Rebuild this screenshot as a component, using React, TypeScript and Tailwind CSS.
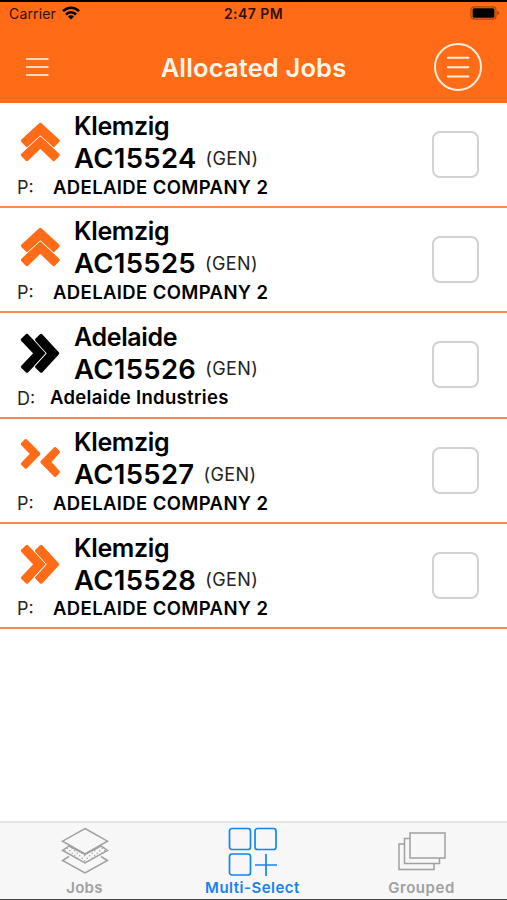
import React, { useState } from 'react';

type Direction = 'up' | 'right' | 'meet';

interface Job {
    suburb: string;
    number: string;
    kind: string;
    label: string;
    company: string;
    direction: Direction;
    iconColor: string;
}

const jobs: Job[] = [
    { suburb: 'Klemzig', number: 'AC15524', kind: '(GEN)', label: 'P:', company: 'ADELAIDE COMPANY 2', direction: 'up', iconColor: 'text-[#ff6b17]' },
    { suburb: 'Klemzig', number: 'AC15525', kind: '(GEN)', label: 'P:', company: 'ADELAIDE COMPANY 2', direction: 'up', iconColor: 'text-[#ff6b17]' },
    { suburb: 'Adelaide', number: 'AC15526', kind: '(GEN)', label: 'D:', company: 'Adelaide Industries', direction: 'right', iconColor: 'text-black' },
    { suburb: 'Klemzig', number: 'AC15527', kind: '(GEN)', label: 'P:', company: 'ADELAIDE COMPANY 2', direction: 'meet', iconColor: 'text-[#ff6b17]' },
    { suburb: 'Klemzig', number: 'AC15528', kind: '(GEN)', label: 'P:', company: 'ADELAIDE COMPANY 2', direction: 'right', iconColor: 'text-[#ff6b17]' },
];

const JobIcon: React.FC<{ direction: Direction }> = ({ direction }) => {
    if (direction === 'meet') {
        return (
            <svg width="40" height="40" viewBox="0 0 40 40" fill="currentColor" stroke="currentColor" strokeWidth="3.400" strokeLinejoin="round">
                <path d="M5.800 2.800 18.600 15.800 5.800 29 2.500 25.800 12 15.800 2.500 6Z" />
                <path d="M35.200 10.800 22.200 24 35.200 37.200 38.200 34 29 24 38.200 14Z" />
            </svg>
        );
    }
    return (
        <svg
            width="40"
            height="40"
            viewBox="0 0 40 40"
            fill="currentColor"
            stroke="currentColor"
            strokeWidth="3.400"
            strokeLinejoin="round"
            className={direction === 'right' ? 'rotate-90' : ''}
        >
            <path d="M20.300 16 38 33 33.800 37.400 20.300 24.600 6.800 37.400 2.600 33Z" />
            <path d="M20.300 2.500 38 18.800 33.800 23.200 20.300 11 6.800 23.200 2.600 18.800Z" stroke="white" strokeWidth="5" />
            <path d="M20.300 2.500 38 18.800 33.800 23.200 20.300 11 6.800 23.200 2.600 18.800Z" />
        </svg>
    );
};

const StatusBar: React.FC = () => (
    <div className="-mt-px grid h-6 grid-cols-3 items-center pl-[9px] pr-[6px] text-[#301000]">
        <div className="flex items-center gap-[6px]">
            <span className="text-[14px] tracking-[0.15px]">Carrier</span>
            <svg width="18" height="14" viewBox="0 0 18 14" fill="none" stroke="black" strokeWidth="2.6">
                <path d="M1 5.2C5.5.5 12.500.5 17 5.200" />
                <path d="M4 8.500C6.800 5.500 11.200 5.500 14 8.500" />
                <path d="M9 13.500 5.900 10.400C7.600 8.700 10.400 8.700 12.100 10.400Z" fill="black" stroke="none" />
            </svg>
        </div>
        <span className="-ml-[3px] text-center text-[14px] font-semibold tracking-[0.45px]">2:47 PM</span>
        <svg width="31" height="14" viewBox="0 0 31 14" className="justify-self-end">
            <rect x="1" y="0.800" width="25" height="12.400" rx="3.200" fill="none" stroke="#a94608" strokeWidth="1.200" />
            <rect x="2.600" y="2.300" width="21.800" height="9.400" rx="1.500" fill="black" />
            <path d="M27.300 4.800v4.400c2.600-.8 2.600-3.600 0-4.400Z" fill="#a94608" />
        </svg>
    </div>
);

const Header: React.FC = () => (
    <header className="h-[102.500px] border-t-2 border-black bg-[#ff6b17]">
        <StatusBar />
        <div className="grid h-[84px] grid-cols-[100px_1fr_100px] items-center">
            <button type="button" className="pl-[26px]" aria-label="Menu">
                <svg width="24" height="20" viewBox="0 0 24 20" stroke="#ffd9b8" strokeWidth="2">
                    <path d="M0 2h22.500M0 10h22.500M0 18h22.500" />
                </svg>
            </button>
            <h1 className="pt-[3px] text-center text-[25.500px] font-semibold tracking-[0.150px] text-[#fff6ea]">Allocated Jobs</h1>
            <button type="button" className="justify-self-end pr-[24px]" aria-label="Options">
                <svg width="50" height="50" viewBox="0 0 50 50" fill="none" stroke="#fff0dc" strokeWidth="2" strokeLinecap="round">
                    <circle cx="25" cy="25" r="23" />
                    <path d="M14.800 15.700h20.600M14.800 25.200h20.600M14.800 34.500h20.600" />
                </svg>
            </button>
        </div>
    </header>
);

const JobRow: React.FC<{ job: Job; checked: boolean; onToggle: () => void }> = ({ job, checked, onToggle }) => (
    <li className="flex h-[105.400px] items-center justify-between border-b-2 border-[#f58a4e] pr-[28px]">
        <div className="pt-[2.400px]">
            <div className="flex">
                <div className={`w-[74px] pl-[20px] pt-[11px] ${job.iconColor}`}>
                    <JobIcon direction={job.direction} />
                </div>
                <div>
                    <div className="h-[31px] text-[25px] font-semibold leading-[31px] tracking-[-0.350px]">{job.suburb}</div>
                    <div className="flex h-[33px] items-center gap-[9px]">
                        <span className="text-[27.500px] font-semibold leading-[33px] tracking-[0.300px]">{job.number}</span>
                        <span className="text-[18px] leading-[30px] tracking-[0.400px] text-[#222]">{job.kind}</span>
                    </div>
                </div>
            </div>
            <div className="flex h-[24.600px] items-center pl-[17px] text-[18px]">
                <span className={job.label === 'D:' ? 'w-[33px] text-[#222]' : 'w-[36px] text-[#222]'}>{job.label}</span>
                <span className={job.label === 'D:' ? 'text-[18.500px] font-semibold tracking-[0.320px]' : 'text-[18.500px] font-semibold tracking-[0.380px]'}>{job.company}</span>
            </div>
        </div>
        <button
            type="button"
            onClick={onToggle}
            aria-pressed={checked}
            className="h-[47px] w-[47px] rounded-[8px] border-2 border-[#d2d2d2]"
        />
    </li>
);

const TabBar: React.FC = () => (
    <nav className="grid h-[79px] grid-cols-3 border-t-2 border-b border-t-[#e6e6e6] border-b-[#444] bg-[#f7f7f7] text-[15px] font-semibold text-[#a0a0a0]">
        <button type="button" className="flex flex-col items-center pt-[4px]">
            <svg width="48" height="50" viewBox="0 0 48 50" fill="none" stroke="currentColor" strokeWidth="1.500">
                <defs>
                    <pattern id="dots" width="5" height="5" patternUnits="userSpaceOnUse">
                        <circle cx="1.200" cy="1.200" r="0.750" fill="#a0a0a0" stroke="none" />
                        <circle cx="3.700" cy="3.700" r="0.750" fill="#a0a0a0" stroke="none" />
                    </pattern>
                </defs>
                <path d="M8 29.500 1.500 33.500 24 46 46.500 33.500 40 29.500" />
                <path d="M8 19 1.500 23.500 24 36 46.500 23.500 40 19 24 27.500Z" fill="url(#dots)" />
                <path d="M24 1.500 46.500 14.200 24 27 1.500 14.200Z" />
            </svg>
            <span className="pt-px leading-[20px] tracking-[0.300px]">Jobs</span>
        </button>
        <button type="button" className="-ml-[2px] flex flex-col items-center pt-[4px] text-[#1683ed]">
            <svg width="50" height="50" viewBox="0 0 50 50" fill="none" stroke="currentColor" strokeWidth="1.700">
                <rect x="1.500" y="1.500" width="21" height="21" rx="2.500" />
                <rect x="27" y="1.500" width="21" height="21" rx="2.500" />
                <rect x="1.500" y="27" width="21" height="21" rx="2.500" />
                <path d="M38 27v22M27 38h22" />
            </svg>
            <span className="pt-px leading-[20px] tracking-[0.500px]">Multi-Select</span>
        </button>
        <button type="button" className="-ml-[2px] flex flex-col items-center pt-[4px]">
            <svg width="50" height="50" viewBox="0 0 50 50" fill="none" stroke="currentColor" strokeWidth="1.500">
                <rect x="13" y="6" width="35" height="25" />
                <path d="M13 11.500H7.500v25h35v-5.500" />
                <path d="M7.500 17H2v25.500h35v-6" />
            </svg>
            <span className="pt-px leading-[20px] tracking-[0.550px]">Grouped</span>
        </button>
    </nav>
);

const App: React.FC = () => {
    const [selected, setSelected] = useState<string[]>([]);

    const toggle = (number: string) => {
        setSelected(prev => (prev.includes(number) ? prev.filter(n => n !== number) : [...prev, number]));
    };

    return (
        <div className="flex h-[900px] w-[507px] flex-col bg-white font-[Inter,sans-serif] text-black">
            <Header />
            <ul className="flex-1">
                {jobs.map(job => (
                    <JobRow key={job.number} job={job} checked={selected.includes(job.number)} onToggle={() => toggle(job.number)} />
                ))}
            </ul>
            <TabBar />
        </div>
    );
};

export default App;
